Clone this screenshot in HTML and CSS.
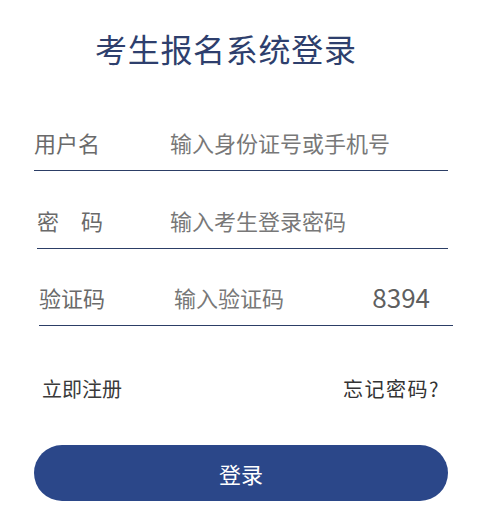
FILE: index.html
```html
<!DOCTYPE html>
<html lang="zh-CN">
<head>
<meta charset="utf-8">
<title>考生报名系统登录</title>
<link rel="stylesheet" href="styles.css">
</head>
<body>
<div class="page">
  <h1 class="title">考生报名系统登录</h1>
  <form class="form">
    <div class="row row-user">
      <label class="label">用户名</label>
      <input class="input" type="text" placeholder="输入身份证号或手机号">
    </div>
    <div class="row row-pass">
      <label class="label">密&emsp;码</label>
      <input class="input" type="password" placeholder="输入考生登录密码">
    </div>
    <div class="row row-code">
      <label class="label">验证码</label>
      <input class="input" type="text" placeholder="输入验证码">
      <span class="code">8394</span>
    </div>
    <div class="links">
      <a class="link" href="#">立即注册</a>
      <a class="link link-dark" href="#">忘记密码?</a>
    </div>
    <button class="btn" type="button">登录</button>
  </form>
</div>
</body>
</html>
```

FILE: styles.css
```css
* { box-sizing: border-box; }
html, body {
  margin: 0;
  padding: 0;
  background: #ffffff;
}
body {
  font-family: "Noto Sans CJK SC", "Noto Sans", sans-serif;
  color: #666666;
}
.page {
  width: 496px;
  padding-top: 28px;
}
.title {
  margin: 0 0 0 95px;
  font-size: 32px;
  line-height: 40px;
  font-weight: 400;
  color: #2e3f6d;
  letter-spacing: 0.7px;
}
.form {
  display: flex;
  flex-direction: column;
  margin-top: 59px;
}
.row {
  display: flex;
  align-items: center;
  height: 44px;
  padding-bottom: 13px;
  border-bottom: 1px solid #2c3e66;
}
.row + .row { margin-top: 34px; }
.row-user { margin-left: 34px; width: 414px; }
.row-pass { margin-left: 37px; width: 411px; }
.row-code { margin-left: 39px; width: 414px; margin-top: 33px !important; }
.label {
  font-size: 22px;
  line-height: 30px;
  color: #6a6a6a;
  flex: 0 0 auto;
}
.row-user .label { width: 136px; }
.row-pass .label { width: 133px; }
.row-code .label { width: 135px; }
.input {
  flex: 1 1 auto;
  min-width: 0;
  border: none;
  outline: none;
  padding: 0;
  margin: 0;
  background: transparent;
  font-family: inherit;
  font-size: 22px;
  line-height: 30px;
  height: 30px;
  color: #555;
}
.input::placeholder { color: #787878; }
.code {
  flex: 0 0 auto;
  font-size: 26px;
  line-height: 30px;
  color: #5f5f5f;
  margin-right: 23px;
}
.links {
  display: flex;
  justify-content: space-between;
  align-items: center;
  margin: 48px 0 0 42px;
  width: 396px;
  height: 30px;
}
.link {
  font-size: 20px;
  line-height: 30px;
  color: #3a3a3a;
  text-decoration: none;
}
.link-dark {
  color: #333333;
  letter-spacing: 1.5px;
  margin-right: -2px;
}
.btn {
  margin: 41px 0 0 34px;
  width: 414px;
  height: 56px;
  border: none;
  border-radius: 28px;
  background: #2b4789;
  color: #ffffff;
  font-family: inherit;
  font-size: 22px;
  line-height: 30px;
  padding: 0;
  cursor: pointer;
}
```
